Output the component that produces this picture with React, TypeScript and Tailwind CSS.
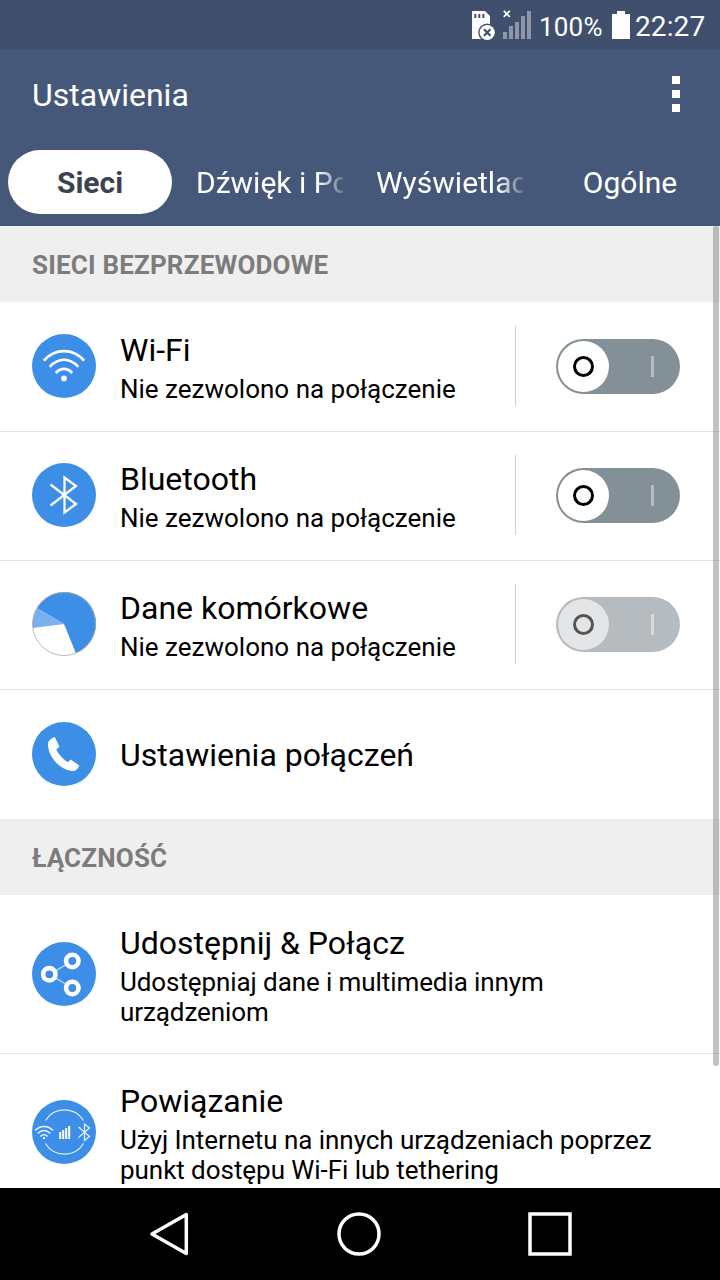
import type { ReactNode } from "react";

const WifiIcon = () => (
  <svg viewBox="0 0 64 64" className="h-16 w-16 shrink-0">
    <circle cx="32" cy="32" r="32" fill="#3d8ee6" />
    <g fill="none" stroke="#fff" strokeWidth="2.700">
      <path d="M11.800 26.700C23 14 41 14 52.200 26.700" />
      <path d="M17.800 32.800C26 23.400 38 23.400 46.200 32.800" />
      <path d="M23.800 39C28.500 33.600 35.500 33.600 40.200 39" />
    </g>
    <circle cx="32" cy="44.400" r="2.800" fill="#fff" />
  </svg>
);

const BluetoothIcon = () => (
  <svg viewBox="0 0 64 64" className="h-16 w-16 shrink-0">
    <circle cx="32" cy="32" r="32" fill="#3d8ee6" />
    <path d="M18.500 21.500L44 41 32.500 49.500V14.500L44 23 18.500 42.500" fill="none" stroke="#fff" strokeWidth="2.300" />
  </svg>
);

const DataIcon = () => (
  <svg viewBox="0 0 64 64" className="h-16 w-16 shrink-0">
    <circle cx="32" cy="32" r="31.5" fill="#fff" />
    <path d="M32 32L43.800 60.900A31.500 31.500 0 1 0 5 16.200Z" fill="#3d8ee6" />
    <path d="M32 32L5 16.200A31.500 31.500 0 0 0 .8 36Z" fill="#7ab0ed" />
    <circle cx="32" cy="32" r="31.5" fill="none" stroke="#a8a8a8" strokeWidth=".8" />
  </svg>
);

const PhoneIcon = () => (
  <svg viewBox="0 0 64 64" className="h-16 w-16 shrink-0">
    <circle cx="32" cy="32" r="32" fill="#3d8ee6" />
    <path
      d="M22.700 15C18 17 16 19 16 22.500C16 36 30 49 41 49C44 49 46 46.500 47.300 43.500L38.800 37.600L36 40C32 38.500 25.500 31 24.300 27.200L27.500 24.800Z"
      fill="#fff"
    />
  </svg>
);

const ShareIcon = () => (
  <svg viewBox="0 0 64 64" className="h-16 w-16 shrink-0">
    <circle cx="32" cy="32" r="32" fill="#3d8ee6" />
    <path d="M40.300 19L17.500 32.300 40.300 46" fill="none" stroke="#b9d6f6" strokeWidth="1.400" />
    <g fill="#3d8ee6" stroke="#fff" strokeWidth="4.600">
      <circle cx="40.300" cy="19" r="6.200" />
      <circle cx="17.300" cy="32.300" r="6.200" />
      <circle cx="40.300" cy="46" r="6.200" />
    </g>
  </svg>
);

const TetherIcon = () => (
  <svg viewBox="0 0 64 64" className="h-16 w-16 shrink-0">
    <circle cx="32" cy="32" r="32" fill="#3d8ee6" />
    <g fill="none" stroke="#e4effc" strokeWidth="1.200">
      <path d="M13.500 20.500A22.300 22.300 0 0 1 51.500 20.500" />
      <path d="M13.500 43.500A22.300 22.300 0 0 0 51.500 43.500" />
      <path d="M3 30.500C8 25 16 25 21 30.500" strokeWidth="1.500" />
      <path d="M5.700 33.500C9.500 29.500 14.500 29.500 18.300 33.500" strokeWidth="1.500" />
      <path d="M8.400 36.500C10.500 34.300 13.500 34.300 15.600 36.500" strokeWidth="1.500" />
      <path d="M46.500 27L57.500 36.500 52.500 40.500V24L57.500 28 46.500 37.500" />
    </g>
    <circle cx="12" cy="38.200" r="1.100" fill="#fff" />
    <path d="M27.200 32h2v7h-2zM30.200 30h2v9h-2zM33.200 28h2v11h-2zM36.200 26h2v13h-2z" fill="#fff" />
  </svg>
);

const StatusBar = () => (
  <div className="flex h-[50px] items-start bg-[#404f6d] pl-[472px] text-white">
    <svg viewBox="0 0 24 30" className="mt-[11px] h-[30px] w-6 shrink-0">
      <path d="M0 0H13L18 5V28H0Z" fill="#fff" />
      <path d="M2.300 3h2v4h-2zM6.300 3h2v4h-2zM10.300 3h2v4h-2z" fill="#404f6d" />
      <circle cx="15.200" cy="21.500" r="9" fill="#404f6d" />
      <circle cx="15.200" cy="21.500" r="7.600" fill="#fff" />
      <path d="M12 18.300l6.400 6.400M18.400 18.300L12 24.700" stroke="#404f6d" strokeWidth="2.200" />
    </svg>
    <svg viewBox="0 0 28 30" className="ml-[7px] mt-[9px] h-[30px] w-7 shrink-0">
      <path d="M.8 1.800l6 6M6.800 1.800l-6 6" stroke="#fff" strokeWidth="1.800" />
      <path d="M0 23h4v7H0zM6 17h4v13H6zM12 13h4v17h-4zM18 7h4v23h-4zM24 2h4v28h-4z" fill="#8d97a9" />
    </svg>
    <span className="ml-2 mt-[12px] w-[66px] text-[26px] leading-[30px] tracking-[0.2px]">100%</span>
    <svg viewBox="0 0 18 28" className="ml-[7px] mt-[11px] h-7 w-[18px] shrink-0">
      <path d="M5 0h8v3h5v25H0V3h5z" fill="#fff" />
    </svg>
    <span className="ml-[5px] mt-[10px] text-[28px] leading-[34px] tracking-[0.1px]">22:27</span>
  </div>
);

const AppBar = () => (
  <header className="h-[176px] bg-[#465879] text-white">
    <div className="flex h-[100px] items-start justify-between pl-8 pr-10">
      <h1 className="mt-[26px] text-[32px] leading-[38px]">Ustawienia</h1>
      <div className="mt-[26px] flex flex-col gap-1.5">
        <i className="h-2 w-2 bg-white" />
        <i className="h-2 w-2 bg-white" />
        <i className="h-2 w-2 bg-white" />
      </div>
    </div>
    <nav className="flex gap-4 px-2 text-[30px] leading-[66px]">
      <div className="h-16 w-[164px] rounded-full bg-white text-center font-bold text-[#3b4350]">Sieci</div>
      <div className="h-16 w-[164px] pl-2">
        <div className="w-[147px] overflow-hidden whitespace-nowrap [mask-image:linear-gradient(to_right,#000_122px,transparent_152px)]">Dźwięk i Po</div>
      </div>
      <div className="h-16 w-[164px] pl-2">
        <div className="w-[147px] overflow-hidden whitespace-nowrap [mask-image:linear-gradient(to_right,#000_122px,transparent_152px)]">Wyświetlac</div>
      </div>
      <div className="h-16 w-[164px] text-center">Ogólne</div>
    </nav>
  </header>
);

const SectionHeader = ({ children }: { children: ReactNode }) => (
  <h2 className="h-[76px] shrink-0 bg-[#efefef] pl-8 pt-px text-[26px] font-bold leading-[76px] tracking-[0.18px] text-[#7c7c7c]">{children}</h2>
);

const Toggle = ({ disabled }: { disabled?: boolean }) => (
  <div className={`flex h-[55px] w-[124px] items-center rounded-full pl-0.5 ${disabled ? "bg-[#b5bbbf]" : "bg-[#849097]"}`}>
    <div className={`flex h-[51px] w-[51px] items-center justify-center rounded-full ${disabled ? "bg-[#e4e5e7]" : "bg-white"}`}>
      <div className={`h-[21px] w-[21px] rounded-full border-3 ${disabled ? "border-[#545454]" : "border-black"}`} />
    </div>
    <div className={`ml-[42px] h-[21px] w-[3px] ${disabled ? "bg-[#d7dadc]" : "bg-[#b5bbc0]"}`} />
  </div>
);

type RowProps = {
  icon: ReactNode;
  title: string;
  lines?: string[];
  className: string;
  textClass?: string;
  toggle?: "off" | "disabled";
};

const Row = ({ icon, title, lines = [], className, textClass = "-mt-[3px]", toggle }: RowProps) => (
  <div className={`flex shrink-0 items-start pl-8 ${className}`}>
    {icon}
    <div className={`ml-6 flex-1 whitespace-nowrap text-black ${textClass}`}>
      <div className="text-[32px] leading-[38px] tracking-normal">{title}</div>
      <div className="mt-[5px] text-[26px] leading-[30px]">
        {lines.map((line) => (
          <div key={line}>{line}</div>
        ))}
      </div>
    </div>
    {toggle && (
      <div className="-mt-2 flex h-20 w-[205px] items-center border-l border-[#cccfd0] pl-10 pt-px">
        <Toggle disabled={toggle === "disabled"} />
      </div>
    )}
  </div>
);

const NavigationBar = () => (
  <div className="flex h-[92px] items-center bg-black">
    <svg viewBox="0 0 720 92" className="h-[92px] w-[720px]" fill="none" stroke="#fff" strokeWidth="3.500" strokeLinejoin="round">
      <path d="M152 46L186.300 26.500V65.500Z" />
      <circle cx="359" cy="46" r="20" />
      <rect x="530" y="26" width="40" height="40" strokeLinejoin="miter" />
    </svg>
  </div>
);

export default function App() {
  const blocked = "Nie zezwolono na połączenie";
  return (
    <div className="flex h-[1280px] w-[720px] flex-col overflow-hidden bg-white font-[Roboto,sans-serif]">
      <StatusBar />
      <AppBar />
      <main className="relative flex h-[962px] flex-col overflow-hidden bg-white">
        <SectionHeader>SIECI BEZPRZEWODOWE</SectionHeader>
        <Row icon={<WifiIcon />} title="Wi-Fi" lines={[blocked]} toggle="off" className="h-[130px] border-b border-[#e1e3e3] pt-8" />
        <Row icon={<BluetoothIcon />} title="Bluetooth" lines={[blocked]} toggle="off" className="h-[129px] border-b border-[#e1e3e3] pt-[31px]" />
        <Row icon={<DataIcon />} title="Dane komórkowe" lines={[blocked]} toggle="disabled" className="h-[129px] border-b border-[#e1e3e3] pt-[31px]" />
        <Row icon={<PhoneIcon />} title="Ustawienia połączeń" className="h-[129px] pt-8" textClass="mt-[14px]" />
        <SectionHeader>ŁĄCZNOŚĆ</SectionHeader>
        <Row
          icon={<ShareIcon />}
          title="Udostępnij & Połącz"
          lines={["Udostępniaj dane i multimedia innym", "urządzeniom"]}
          className="h-[159px] border-b border-[#e1e3e3] pt-[47px]"
          textClass="-mt-[18px] tracking-[-0.09px]"
        />
        <Row
          icon={<TetherIcon />}
          title="Powiązanie"
          lines={["Użyj Internetu na innych urządzeniach poprzez", "punkt dostępu Wi-Fi lub tethering"]}
          className="h-[159px] pt-[46px]"
          textClass="-mt-[18px] tracking-[-0.05px]"
        />
        <div className="absolute left-[713px] top-0 h-[840px] w-1.5 rounded-full bg-[#828785]/50" />
      </main>
      <NavigationBar />
    </div>
  );
}
